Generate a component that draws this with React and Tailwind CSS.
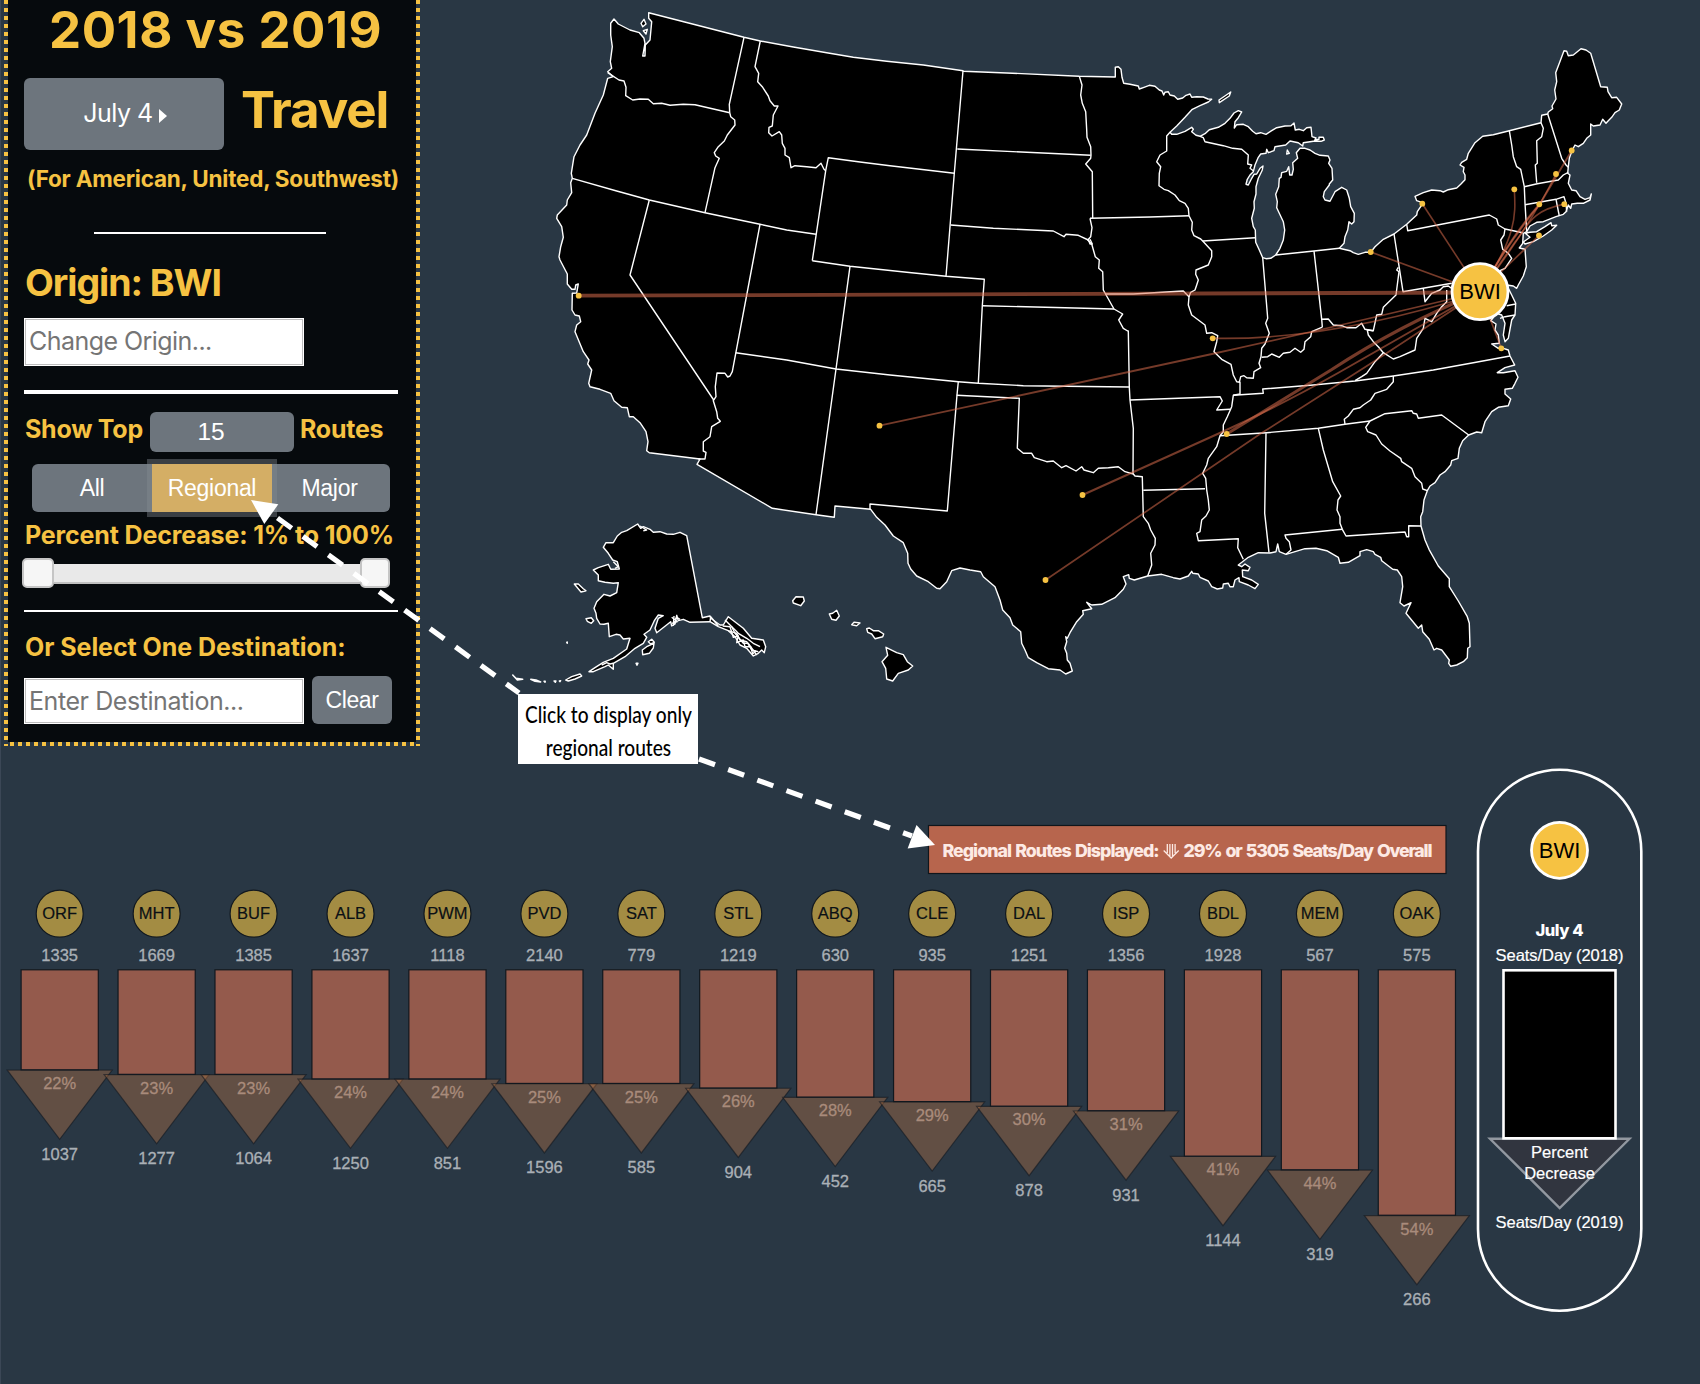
import React from "react";

// Outline points are stored in tiles, in thirds of a pixel from each tile's corner.
const TILES = {
  A: [540, 0],
  B: [540, 260],
  C: [940, 40],
  D: [940, 320],
  E: [1250, 30],
  F: [1180, 320],
  G: [480, 500],
};

function toPoints(source) {
  let tile = TILES.A;
  const out = [];
  for (const token of source.trim().split(/\s+/)) {
    if (TILES[token]) {
      tile = TILES[token];
    } else {
      const [x, y] = token.split(",").map(Number);
      out.push(`${(tile[0] + x / 3).toFixed(1)},${(tile[1] + y / 3).toFixed(1)}`);
    }
  }
  return out.join(" ");
}

const MAINLAND = `
A 326,38 612,112 661,123 760,141 860,158 940,172 1040,184 1150,195 1269,212
C 70,94 200,99 418,109 526,111 526,82 535,80 543,88 546,112 551,130 570,133 595,138 598,147 612,142 628,136 645,139 658,150 666,153 671,165 675,157 685,155 690,165 703,168 713,178 728,174 738,166 750,162 755,172 770,170 790,171 804,177 815,178 805,186 780,197 757,208 735,232 710,258 690,277 695,283 710,283 735,274 755,262 760,268 755,275 768,286 780,289 795,281 808,269 835,262 855,250 870,235 882,219 895,212 905,216 895,233 885,245 883,264 890,254 910,253 925,260 938,274 948,281 962,278 978,283 995,272 1010,263 1035,258 1053,257 1062,249 1066,270 1078,268 1090,272 1100,263 1113,262 1116,290 1128,294 1124,301 1137,298 1137,292 1150,292 1153,300 1143,304 1120,304 1090,308 1088,318 1075,308 1050,303 1037,315 1005,320 1002,332 985,338 980,328 978,340 962,342 955,352 945,375 940,395 930,405 922,418 918,433 925,435 935,415 942,403 950,402 960,385 969,378 967,390 955,415 948,440 948,462 942,485 943,505 935,535 940,560 946,570 947,607 958,630 968,653 978,656 992,655 1007,645 1020,625 1030,600 1034,570 1030,545 1018,520 1010,503 1012,485 1007,463 1016,440 1018,415 1023,412 1025,398 1040,394 1046,380 1049,405 1056,405 1060,388 1058,368 1073,355 1069,338 1080,325 1095,325 1110,330 1125,340 1140,346 1165,348 1170,360 1166,370 1176,385 1178,420 1168,432
E 238,465 223,485 220,500 225,510 240,514 255,485 275,472 290,480 298,505 302,530 313,550 312,575 305,582 297,575 293,600 285,620 282,640 268,655 300,662 310,668 325,673 345,667 362,667 375,650 400,628 432,612 470,583 500,555 502,545 518,521 515,517 500,512 495,499 520,488 545,480 570,482 580,486 595,479 620,474 632,463 645,449 645,435 640,425 642,412 630,405 635,397 650,388 655,370 675,338 698,319 730,314 778,302 873,278 875,256 893,252 895,246 908,236 906,228 918,207 914,180 920,155 917,128 928,100 942,62 950,64 955,77 970,75 993,56 1008,60 1022,70 1037,120 1052,170 1072,172 1074,185 1085,203 1100,202 1115,222 1108,240 1095,248 1085,262 1075,272 1068,280 1058,268 1050,285 1030,288 1022,282 1022,315 1010,325 1000,340 985,350 975,345 966,362 958,385 955,410 953,430 960,435 955,460 965,480 978,482 990,500 1005,508 1020,503 1024,492 1020,510 1000,520 982,520 965,522 962,535 955,525 948,545 940,553 918,560 880,575 860,577 840,588 830,605 820,610 818,640 808,654 825,658 829,710 820,738 805,765 800,775 790,768 770,765 785,795 797,820 795,855 785,870 775,925 765,935 760,915 765,880 755,855 740,850 722,872 738,882 735,900 745,915 748,940 725,942 745,955 760,955
F 985,90 990,108 1004,135 975,143 952,158 970,158 1005,152 1014,172 1005,190 997,205 975,208 975,222 992,237 985,257 955,262 935,275 915,305 905,338 890,336 866,345 848,362 838,385 834,415 815,422 812,435 795,455 780,465 765,488 750,498 742,512 732,540 728,575 722,590 723,618 735,660 747,688 775,738 808,776 808,800 835,843 862,890 868,910 870,980 863,985 862,1013 850,1025 830,1035 812,1039 806,1030 808,1020 785,990 770,985 762,990 748,958 728,935 725,915 715,925 678,880 693,848 672,858 660,848 668,800 665,770 652,750 638,748 605,722 602,712 585,703 580,695 560,689 540,695 540,707 505,727 480,730 475,712 440,692 408,685 375,686 318,703 298,695 293,672 288,695 270,699 235,698 205,712 175,735 185,740 195,732 210,742 205,752 187,750 188,770 215,780 235,793 225,806 205,795 178,785 177,773 165,780 160,800 150,800 145,790 130,792 128,804 112,807 95,800 85,783 60,772 55,762 38,760 35,754 25,768 0,777
D 700,773 665,763 623,768 583,780 568,775 566,764 550,770 558,792 550,808 525,833 485,853 455,855 440,847 455,866 428,872 430,883 410,905 390,938 382,955 377,950 380,965 374,985 380,1000 382,1020 390,1030 397,1053 377,1062 360,1050 325,1046 290,1028 265,1013 255,990 245,970 242,935 218,915 210,893 188,870 180,840 165,800 130,770 122,755 90,750 60,744 35,752 20,785 0,806
G 1370,265 1345,245 1310,228 1292,207 1284,190 1283,160 1270,128 1240,108 1215,75 1190,52 1172,28
B 885,738 883,772 828,764 697,745 471,613 480,597 328,578 320,572 324,545 318,515 300,488 280,470 268,470 262,443 245,442 222,422 212,400 180,388 150,380 146,370 155,330 143,312 147,300 130,275 105,215 110,195 122,185 118,168 105,165 96,150 97,100 110,99 115,72 107,75 105,88 95,88 82,72 82,42 60,0
A 57,770 62,740 70,712 65,680 50,655 52,645 80,615 82,600 95,578 92,548 97,535 94,520 102,470 120,435 140,405 165,340 190,285 203,235 220,230 203,215 215,205 211,185 217,140 212,105 212,70 222,57 235,72 270,90 298,98 312,115 315,130 308,168 315,168 316,135 330,120 335,65 326,55 326,38`;

const ISLANDS = [
  "A 312,58 318,72 308,80 303,70",
  "A 310,92 322,88 318,102",
  "C 837,180 872,156 868,168 838,188",
  "C 1042,330 1048,340 1040,342",
  "E 826,610 840,607 860,605 885,590 903,578 905,587 920,586 905,600 880,618 850,635 825,642 820,636 840,622",
  "G 473,72 482,85 490,80 510,88 520,97 540,95 560,102 580,103 600,97 620,107 667,353 690,348 692,355 720,375 730,375 745,350 790,385 815,415 850,420 857,440 853,458 845,450 835,460 820,468 800,445 780,435 765,410 745,392 715,380 690,365 630,367 610,358 595,362 590,346 585,372 575,378 572,365 530,398 525,385 535,355 550,347 535,345 523,362 510,390 492,403 500,412 490,430 465,445 435,470 400,490 400,508 385,495 375,500 340,515 327,515 345,503 370,487 400,475 440,447 450,415 430,417 420,405 408,403 388,410 385,370 372,373 360,372 350,355 348,340 342,325 350,305 372,283 390,288 410,278 415,248 400,250 375,247 355,242 355,225 340,210 355,203 385,193 392,208 418,207 412,185 398,180 385,160 370,142 378,128 400,128 412,108 425,97 440,92",
  "G 283,252 295,252 310,266 318,272 303,276",
  "G 318,356 334,353 341,362 334,370 322,364",
  "G 260,427 262,426 262,430",
  "G 487,450 500,440 522,430 520,444 508,460 488,464",
  "G 505,425 515,418 523,427 512,432",
  "G 468,490 474,490 471,496",
  "G 257,540 275,530 300,522 305,528 285,537 265,543",
  "G 98,525 108,535 128,538 112,540",
  "G 152,538 168,540 182,546 165,544",
  "G 192,544 196,544 195,547",
  "G 222,543 228,543 226,547",
  "G 238,543 242,542 240,545",
  "G 938,302 948,290 970,291 973,303 962,317 940,309",
  "G 1048,342 1058,340 1070,331 1078,348 1068,361 1055,358",
  "G 1115,374 1122,367 1140,369 1130,377",
  "G 1160,386 1168,384 1180,392 1195,392 1211,402 1208,410 1185,416 1175,402 1163,397",
  "G 1218,442 1250,458 1270,464 1282,485 1298,498 1285,510 1255,520 1238,543 1220,537 1217,505 1206,485 1223,466",
];

const BORDERS = [
  "A 612,112 568,313 569,338",
  "A 203,218 237,240 252,243 258,262 257,287 278,300 300,297 325,298 340,311 365,310 390,316 430,313 465,314 569,338",
  "A 569,338 572,350 584,360 585,375 562,405 553,423 535,440 523,458 527,468 538,475 525,503 495,638",
  "A 97,535 230,573 328,600 495,638 660,673 740,690 828,703",
  "A 328,600 270,825 B 272,48 521,420",
  "A 660,673 B 640,0 577,335 570,348 563,351 555,340 531,339 526,380 528,410 520,422 530,455 533,475 541,484 515,500 510,530 490,545 490,573 498,577 495,597 475,597",
  "A 661,123 645,200 656,220 653,245 668,262 685,288 690,302 703,318 714,318 700,345 697,378 687,382 686,398 696,408 718,395 725,405 727,430 735,445 735,465 748,473 753,503 765,497 800,500 828,503 843,490 852,508 857,512",
  "A 817,782 857,512 865,473 960,486 1050,497 1243,520",
  "A 817,782 930,799 1100,817 1218,829 C 133,718 127,797 D 115,190",
  "A 1269,212 1243,520 1218,829",
  "C 52,327 452,346",
  "C 32,555 160,565 340,573 372,590 378,583 415,586 445,600",
  "A 930,799 B 888,327 828,764",
  "B 587,278 740,300 888,327 1050,345 1255,365 D 115,190 250,197 568,201",
  "C 127,797 522,807",
  "B 1255,365 1251,405 1222,753 990,732 990,748",
  "D 50,226 238,235 232,385 250,400 275,400 283,413 320,425 340,423 365,443 378,437 408,453 425,440 432,450 460,458 475,445 505,443 535,440 555,455 580,462 585,468 607,470 610,590 625,610 632,630 646,655 645,675 632,700 635,735 623,768",
  "C 522,807 548,822 536,840 550,865 563,873 D 565,33 568,201 570,240 580,325 579,462",
  "D 570,240 840,230 847,243 830,270 870,268",
  "D 610,511 795,506",
  "C 418,109 426,135 422,165 427,190 437,215 440,270 441,292 452,320 453,346 452,355 437,372 457,395 458,534",
  "C 450,535 630,531 747,527",
  "C 450,535 452,545 456,563 452,590 443,600 455,612 466,650 478,660 476,685 488,695 490,750 522,807",
  "C 445,598 450,612 457,612 450,598",
  "C 495,762 580,762 730,753 747,770",
  "C 690,277 680,288 680,333 660,345 650,365 662,380 658,400 657,437 672,448 685,452 705,465 718,482 735,490 745,505 747,527 757,547 755,570 762,587 782,597 788,603 815,632 815,650 805,675 768,690 767,703 775,720 770,735 765,750 752,757 747,770 745,795 755,825 795,855 800,880 D 815,38 833,47 830,65 822,95 845,118 873,133 880,165 890,185 900,187 900,222 880,226 875,260 862,290 850,315 850,335 840,347 830,380 805,415 800,435 788,460 797,475 800,510 805,540 808,570 798,588 785,600 780,635 770,640 775,662 895,656 893,683 910,718",
  "C 788,603 945,593",
  "C 780,289 790,293 795,305 850,317 878,325 905,328 925,345 923,372 935,375 930,385 940,392",
  "C 968,653 983,835 D 977,10 988,40 975,72 965,85 963,110 957,130 962,143 942,155 940,175 920,173 912,167 902,170 898,187",
  "C 1007,645 1122,633 E 268,655",
  "E 192,663 215,868 217,890 F 425,22 395,35 392,50 375,65 372,88 362,97 345,85 330,97 310,100 298,112 275,102 263,110 245,112",
  "E 215,868 235,867 250,885 275,887 290,893 318,893 335,880 345,898 370,902 380,855 395,853 400,832 438,795 447,725 440,720 445,712",
  "E 432,612 459,785 605,760",
  "E 470,583 473,602 718,555 740,567 745,585 765,597 818,608",
  "E 765,597 762,615 752,630 758,658 775,670 785,685 765,715 750,722",
  "E 778,302 785,345 790,380 800,410 812,418 823,470 825,520 830,605",
  "E 873,278 880,295 875,320 860,332 862,400 856,405 860,458",
  "E 893,252 935,385 948,405 955,412",
  "E 823,470 862,461 925,450 940,435 955,427",
  "E 825,524 918,508 942,500 948,520 950,545",
  "E 918,508 928,558",
  "E 520,775 525,815 545,790 570,780 580,770 595,768 605,775",
  "E 590,780 590,815 575,830 560,850 545,875 525,865 520,895 500,925 495,960 450,980 430,987 400,968 385,950 370,935 355,915 352,900 370,902",
  "F 610,98 585,125 560,160 545,170 525,182",
  "F 160,226 250,220 248,207 400,195 525,183 640,168 760,150 880,128 990,108",
  "F 640,168 640,185 620,208 585,220 572,240 550,255 540,263 520,268 505,288 493,298 495,312",
  "F 120,347 260,338 415,325 495,313 570,303",
  "F 570,303 615,281 695,272 700,280 710,282 715,295 785,285 866,345",
  "F 570,303 557,322 563,335 588,345 605,372 630,393 662,415 665,425 695,445 705,470 725,490 728,507 742,512",
  "F 258,340 254,580 267,698",
  "F 415,325 430,390 458,485 482,528 474,540 471,570 480,590 480,610 487,628 498,648 675,636 680,650 686,650 686,617 723,618",
  "F 487,628 315,645 318,655 328,665 333,690 318,703",
  "E 750,865 765,860 795,855",
  "E 770,827 797,822",
  "G 690,365 692,350 715,378",
  "G 735,360 760,385 775,400 800,415 820,430 840,440",
  "G 745,392 770,400 780,420 800,425 815,450 835,455",
  "G 755,380 765,400 790,430 805,430 830,465",
  "G 728,378 750,380 760,412 775,408 770,428 790,420 795,440 812,440 818,462 828,452",
  "G 480,78 500,90 490,92",
  "G 575,352 592,365 578,370 590,352 600,358",
  "G 582,348 580,376 588,360",
  "G 365,495 380,488 390,492 400,490",
  "G 400,185 415,200 405,205",
];

const HUB = [1480, 291.7];

const DOTS = [
  [578.7, 295.7], [879.5, 425.7], [1212.7, 338.3], [1226.7, 434], [1082.5, 495], [1045.5, 580],
  [1422.3, 203.7], [1370.7, 252], [1514.3, 189.3], [1571.7, 150.5], [1556, 174], [1539.3, 204.3],
  [1564.3, 204.2], [1539, 235.5], [1501.3, 348.3],
];

const ROUTES = [
  { d: "M578.7 295.7 Q1030 292.5 1480 292.5", w: 3.8 },
  { d: "M879.5 425.7 L1212 354 Q1340 326 1480 292", w: 1.8 },
  { d: "M1212.7 338.3 Q1330 341 1480 293", w: 1.7 },
  { d: "M1226.7 434 L1331 370 Q1400 325 1480 292", w: 3 },
  { d: "M1082.5 495 L1222 432 Q1285 403 1338 373 T1480 292", w: 2 },
  { d: "M1045.5 580 L1260 434 Q1370 365 1480 292", w: 1.7 },
  { d: "M1422.3 203.7 L1480 292", w: 1.6 },
  { d: "M1370.7 252 L1480 292", w: 1.7 },
  { d: "M1514.3 189.3 C1516 218 1516 236 1480 292", w: 1.6 },
  { d: "M1571.7 150.5 L1540 204 Q1510 240 1480 292", w: 1.9 },
  { d: "M1556 174 Q1530 226 1480 292", w: 1.6 },
  { d: "M1539.3 204.3 Q1512 235 1480 292", w: 1.9 },
  { d: "M1564.3 204.2 C1530 211 1528 226 1515 242 L1480 292", w: 1.7 },
  { d: "M1539 235.5 L1503 270 L1480 292", w: 1.7 },
  { d: "M1501.3 348.3 L1480 292", w: 1.7 },
];

function RouteMap() {
  return (
    <svg className="block h-[746px] w-[1280px] shrink-0" viewBox="420 0 1280 746">
      <g fill="#000" stroke="#fff" strokeWidth="1.4" strokeLinejoin="round">
        <polygon points={toPoints(MAINLAND)} />
        {ISLANDS.map((s) => (
          <polygon key={s} points={toPoints(s)} />
        ))}
        {BORDERS.map((s) => (
          <polyline key={s} points={toPoints(s)} fill="none" />
        ))}
      </g>
      <g fill="none" stroke="#e0704f" strokeOpacity="0.52">
        {ROUTES.map((r) => (
          <path key={r.d} d={r.d} strokeWidth={r.w} />
        ))}
      </g>
      {DOTS.map(([x, y]) => (
        <circle key={x} cx={x} cy={y} r="2.9" fill="#f6c242" />
      ))}
      <circle cx={HUB[0]} cy={HUB[1]} r="28" fill="#f6c242" stroke="#fff" strokeWidth="2.8" />
      <text x={HUB[0]} y="299" textAnchor="middle" fontSize="22" fontFamily="Liberation Sans, sans-serif">BWI</text>
    </svg>
  );
}

const AIRPORTS = [
  ["ORF", 1335, 22, 1037], ["MHT", 1669, 23, 1277], ["BUF", 1385, 23, 1064], ["ALB", 1637, 24, 1250],
  ["PWM", 1118, 24, 851], ["PVD", 2140, 25, 1596], ["SAT", 779, 25, 585], ["STL", 1219, 26, 904],
  ["ABQ", 630, 28, 452], ["CLE", 935, 29, 665], ["DAL", 1251, 30, 878], ["ISP", 1356, 31, 931],
  ["BDL", 1928, 41, 1144], ["MEM", 567, 44, 319], ["OAK", 575, 54, 266],
];

function SeatsChart() {
  return (
    <svg
      className="block h-[638px] w-[1699px]"
      viewBox="1 746 1699 638"
      fontFamily="Liberation Sans, sans-serif"
      fontSize="16.5"
      textAnchor="middle"
    >
      <rect x="928.5" y="825.5" width="517.5" height="48" fill="#b7654d" stroke="#10151b" strokeWidth="1.2" />
      <g fill="#fdeae4" fontFamily="Inter, sans-serif" fontWeight="800" fontSize="17.8" wordSpacing="1.5">
        <text x="942.5" y="856.5" textAnchor="start" textLength="217" lengthAdjust="spacing">Regional Routes Displayed:</text>
        <text x="1183.5" y="856.5" textAnchor="start" textLength="249" lengthAdjust="spacing">29% or 5305 Seats/Day Overall</text>
      </g>
      <g fill="none" stroke="#fdeae4" strokeWidth="1.3">
        <path d="M1167.3 844v9M1169.9 844v12M1172.5 844v12M1175.1 844v9M1163.7 850.5l7.5 7.5l7.5 -7.5" />
      </g>
      {AIRPORTS.map(([code, before, pct, after], i) => {
        const x = 59.7 + i * 96.94;
        const base = 969.8 + pct * 4.545;
        return (
          <g key={code}>
            <circle cx={x} cy="913.7" r="23.5" fill="#a38c43" stroke="#11181f" strokeWidth="1.2" />
            <text x={x} y="919.2" fill="#0b1015" stroke="#0b1015" strokeWidth="0.2">{code}</text>
            <text x={x} y="961" fill="#aab0b6" stroke="#aab0b6" strokeWidth="0.3">{before}</text>
            <path
              d={`M${x - 52.5} ${base + 0.3}h105L${x} ${base + 69.5}z`}
              fill="#e38545"
              fillOpacity="0.31"
              stroke="#11181f"
              strokeOpacity="0.6"
              strokeWidth="1.2"
            />
            <rect x={x - 38.6} y="969.8" width="77.2" height={base - 969.8} fill="#945a4c" stroke="#11181f" strokeWidth="1.2" />
            <text x={x} y={base + 19.3} fill="#a98b7b" stroke="#a98b7b" strokeWidth="0.3">{pct}%</text>
            <text x={x} y={base + 90} fill="#aab0b6" stroke="#aab0b6" strokeWidth="0.3">{after}</text>
          </g>
        );
      })}
      <rect x="1478" y="769.7" width="163.3" height="541" rx="81.6" fill="none" stroke="#fff" strokeWidth="2.6" />
      <circle cx="1559.5" cy="850.3" r="28" fill="#f6c242" stroke="#fff" strokeWidth="2.8" />
      <text x="1559.5" y="858" fontSize="22" fill="#000">BWI</text>
      <g fill="#fff">
        <text x="1559.5" y="936" fontFamily="Inter, sans-serif" fontWeight="800" fontSize="16.5" textLength="48">July 4</text>
        <text x="1559.5" y="961" textLength="128" stroke="#fff" strokeWidth="0.2">Seats/Day (2018)</text>
        <path d="M1490 1138.8h139.5L1559.7 1208z" fill="#31353f" stroke="#9298a0" strokeWidth="2.4" />
        <rect x="1503.5" y="970.3" width="112" height="168" fill="#000" stroke="#fff" strokeWidth="2.6" />
        <g stroke="#fff" strokeWidth="0.2">
          <text x="1559.5" y="1158">Percent</text>
          <text x="1559.5" y="1179.3">Decrease</text>
          <text x="1559.5" y="1228.3" textLength="128">Seats/Day (2019)</text>
        </g>
      </g>
    </svg>
  );
}

function Sidebar() {
  return (
    <aside className="ml-[3px] h-[746px] w-[416px] shrink-0 bg-[repeating-linear-gradient(to_bottom,#f6c242_0_4px,transparent_4px_8px)]">
      <div className="mx-1 h-[746px] bg-[#293744] bg-[repeating-linear-gradient(to_right,transparent_0_2px,#f6c242_2px_6px,transparent_6px_8px)] pb-1">
        <div className="flex h-[742px] flex-col bg-[#060a0d] pr-[18px] pl-4 font-[Inter,sans-serif] font-bold text-[#f6c242]">
          <h1 className="h-[78px] pl-[25px] text-[51px] leading-[60px] tracking-[0.55px] whitespace-nowrap">2018 vs 2019</h1>
          <div className="flex h-[72px] items-center gap-[17px]">
            <button className="flex h-[72px] w-[200px] items-center justify-center gap-[6px] rounded-md bg-[#6d757d] pl-[2px] font-[Inter,sans-serif] text-[25px] font-normal tracking-[-0.5px] text-white">
              July 4
              <span className="mt-1 border-y-[7px] border-l-[8px] border-y-transparent border-l-white" />
            </button>
            <span className="mb-[9px] text-[51px] leading-none tracking-[-1.1px]">Travel</span>
          </div>
          <p className="mt-3 ml-[3px] h-[34px] text-[22.5px] leading-[33px] tracking-[-0.22px] whitespace-nowrap">(For American, United, Southwest)</p>
          <hr className="mt-[36px] ml-[70px] h-[2px] w-[232px] border-0 bg-white" />
          <h2 className="mt-[25px] ml-[1px] h-12 text-[37.5px] leading-[48px] tracking-[-1.05px]">Origin: BWI</h2>
          <div className="mt-[11px] h-12 w-[280px] border border-white bg-white font-normal text-[#757575]">
            <div className="h-full border border-[#bdbdbd] pl-[3px] text-[25px] leading-[42px] tracking-[-0.55px]">Change Origin...</div>
          </div>
          <hr className="mt-6 h-1 w-[374px] border-0 bg-white" />
          <div className="mt-[18px] flex h-10 items-center text-[25px] tracking-[-0.25px] whitespace-nowrap">
            <span className="-mt-1 ml-[1px] w-[125px]">Show Top</span>
            <span className="h-10 w-36 rounded-md bg-[#6d757d] pr-[22px] text-center font-['Liberation_Sans',sans-serif] text-[24.5px] leading-[39px] font-normal text-white">15</span>
            <span className="-mt-1 ml-[6px]">Routes</span>
          </div>
          <div className="mt-3 ml-2 flex h-12 w-[358px] text-center font-['Liberation_Sans',sans-serif] text-[23px] leading-[49px] font-normal tracking-[-0.3px] text-white">
            <span className="w-[120px] rounded-l-md bg-[#6d757d]">All</span>
            <span className="relative w-[120px] bg-[#d4ae65] shadow-[0_0_0_5px_rgba(130,138,145,0.42)]">Regional</span>
            <span className="w-[118px] rounded-r-md bg-[#6d757d] pr-[3px]">Major</span>
          </div>
          <p className="mt-[7px] ml-[1px] h-8 text-[25px] leading-8 tracking-[-0.14px] whitespace-nowrap">Percent Decrease: 1% to 100%</p>
          <div className="mt-[7px] -ml-[2px] flex h-[30px] w-[368px] items-center justify-between">
            <span className="h-[30px] w-8 shrink-0 rounded-[5px] border-2 border-[#c5c5c5] bg-[#f6f6f6]" />
            <span className="mt-[2px] h-5 flex-1 border-b-2 border-[#c0c0c0] bg-[#e9e9e9]" />
            <span className="h-[30px] w-[30px] shrink-0 rounded-[5px] border-2 border-[#c5c5c5] bg-[#f6f6f6]" />
          </div>
          <hr className="mt-[22px] h-[2px] w-[374px] border-0 bg-white" />
          <p className="mt-[19px] ml-[1px] h-8 text-[25px] leading-8 tracking-[-0.05px] whitespace-nowrap">Or Select One Destination:</p>
          <div className="mt-[13px] flex items-end gap-2 font-normal">
            <div className="h-[46px] w-[280px] border border-white bg-white text-[#757575]">
              <div className="h-full border border-[#bdbdbd] pl-[3px] text-[25px] leading-[42px] tracking-[-0.43px]">Enter Destination...</div>
            </div>
            <button className="h-12 w-20 rounded-md bg-[#6d757d] pt-px font-['Liberation_Sans',sans-serif] text-[23px] tracking-[-0.4px] text-white">Clear</button>
          </div>
        </div>
      </div>
    </aside>
  );
}

function Annotations() {
  return (
    <div className="pointer-events-none absolute inset-0">
      <svg className="absolute inset-0 h-full w-full" viewBox="0 0 1700 1384">
        <g stroke="#fff" strokeWidth="5.2" strokeDasharray="17.5 13.9" fill="none">
          <path d="M277.5 518L519 693" />
          <path d="M699 759L912 836" strokeDasharray="17 14" />
        </g>
        <path d="M251 500L278.3 504.3L264.3 524z" fill="#fff" />
        <path d="M935 845L916.5 825L907.6 848.5z" fill="#fff" />
      </svg>
      <div className="absolute top-[694px] left-[518px] flex h-[70px] w-[180px] flex-col items-center justify-center bg-white pt-[3px] text-center font-[Lato,sans-serif] text-[23px] leading-[33px] font-medium whitespace-nowrap text-black">
        <span className="scale-x-[0.83]">Click to display only</span>
        <span className="scale-x-[0.83]">regional routes</span>
      </div>
    </div>
  );
}

export default function App() {
  return (
    <main className="relative h-[1384px] w-[1700px] overflow-hidden border-l border-[#3b4756] bg-[#293744]">
      <div className="flex">
        <Sidebar />
        <RouteMap />
      </div>
      <SeatsChart />
      <div className="absolute inset-y-0 -left-px w-[1700px]">
        <Annotations />
      </div>
    </main>
  );
}
